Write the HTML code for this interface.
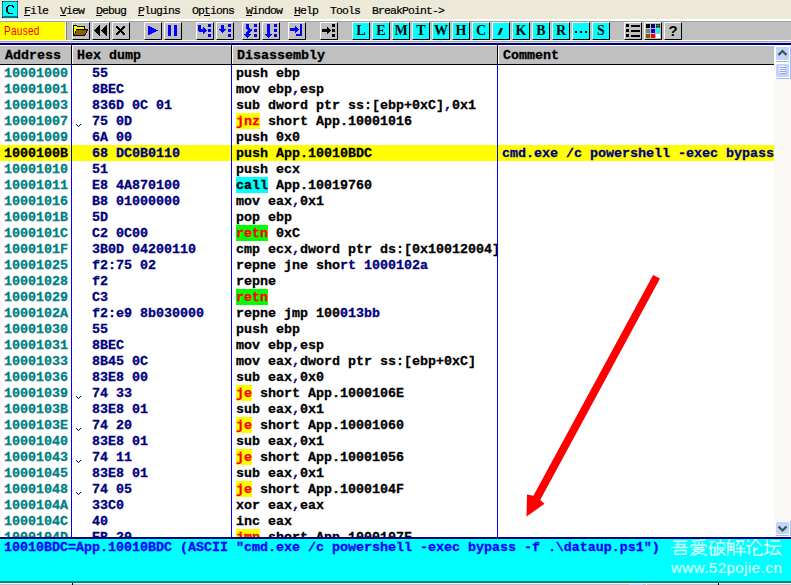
<!DOCTYPE html>
<html><head><meta charset="utf-8">
<style>
*{margin:0;padding:0;box-sizing:border-box}
html,body{width:791px;height:585px;overflow:hidden;background:#fff}
body{position:relative;font-family:"Liberation Mono",monospace}
.abs{position:absolute}
#menu{position:absolute;left:0;top:0;width:791px;height:19px;background:#ECE9D8}
.mi{position:absolute;top:3px;height:16px;line-height:16px;font-size:11.5px;letter-spacing:-0.9px;color:#000;white-space:pre;-webkit-text-stroke:0.2px #000}
.mi u{text-decoration:none;position:relative}.mi u::after{content:'';position:absolute;left:0;width:6px;top:11px;height:1px;background:#000}
#tb{position:absolute;left:0;top:22px;width:791px;height:19px;background:#C0C0C0}
.btn{position:absolute;top:22px;width:18px;height:18px;background:#C0C0C0;border-top:1px solid #fff;border-left:1px solid #fff;border-right:1px solid #000;border-bottom:1px solid #000}
.cb{background:#00FFFF;font-family:"Liberation Serif",serif;font-weight:bold;font-size:14px;line-height:15px;text-align:center;color:#000}
.btn svg{position:absolute;left:0;top:0}
#hdr{position:absolute;left:0;top:45px;width:774px;height:20px;background:#C0C0C0;border-top:1px solid #fff;border-bottom:1px solid #000}
.ht{position:absolute;top:48px;margin-left:1px;height:16px;line-height:16px;font-size:13.333px;font-weight:bold;color:#000;white-space:pre;-webkit-text-stroke:0.3px #000}
.hsep{position:absolute;top:45px;width:1px;height:19px;background:#000}
.hhl{position:absolute;top:46px;width:1px;height:18px;background:#fff}
.vsep{position:absolute;top:65px;width:1px;height:472px;background:#0000FF;z-index:3}
.row{position:absolute;left:0;width:774px;height:16px;font-size:13.333px;font-weight:bold;line-height:16px;white-space:pre;-webkit-text-stroke:0.3px currentColor}
.row span{position:absolute;top:1px}
.row.sel{background:#FFFF00}
.ad{left:4px;color:#008080}
.sel .ad{color:#000}
.hx{left:92px;color:#000080}
.ds{left:236px;color:#000}
.ds span{position:static!important}
.cm{left:502px;color:#000080}
.ds i{font-style:normal}
.hj{color:#FF0000}
.hc{color:#000}
.hr{color:#FF0000}
.hlb{position:absolute;left:236px;top:0;height:16px}
.nv{color:#000080}
.chev{position:absolute;left:76px}
#stat{position:absolute;left:0;top:537px;width:791px;height:48px;background:#00FFFF}
</style></head><body>
<div id="menu"></div>
<svg class="abs" style="left:2px;top:1px" width="16" height="17" viewBox="0 0 16 17">
<rect x="0" y="0" width="16" height="17" fill="#008080"/>
<rect x="1" y="1" width="14" height="14" fill="#00FFFF"/>
<rect x="0" y="0" width="1" height="1" fill="#000"/><rect x="15" y="0" width="1" height="1" fill="#000"/>
<rect x="0" y="16" width="1" height="1" fill="#000"/><rect x="15" y="16" width="1" height="1" fill="#000"/>
<path d="M6 4h5v1h1v2h-1v-1h-1v-1h-3v1h-1v5h1v1h4v1h-5v-1h-1v-1h-1v-5h1v-1h1z" fill="#000"/>
</svg>
<div class="mi" style="left:24px"><u>F</u>ile</div>
<div class="mi" style="left:60px"><u>V</u>iew</div>
<div class="mi" style="left:96px"><u>D</u>ebug</div>
<div class="mi" style="left:138px"><u>P</u>lugins</div>
<div class="mi" style="left:192px">Op<u>t</u>ions</div>
<div class="mi" style="left:246px"><u>W</u>indow</div>
<div class="mi" style="left:294px"><u>H</u>elp</div>
<div class="mi" style="left:330px">Tools</div>
<div class="mi" style="left:372px">BreakPoint-&gt;</div>
<div class="abs" style="left:0;top:19px;width:791px;height:2px;background:#fff"></div>
<div class="abs" style="left:0;top:21px;width:791px;height:1px;background:#A0A0A0"></div>
<div id="tb"></div>
<div class="abs" style="left:0;top:22px;width:65px;height:18px;background:#FFFF00"></div>
<div class="abs" style="left:4px;top:23px;height:16px;line-height:16px;font-family:'Liberation Sans';font-size:12px;letter-spacing:0.3px;transform:scaleX(0.84);transform-origin:0 0;color:#FF0000">Paused</div>
<div class="abs" style="left:65px;top:22px;width:1px;height:19px;background:#fff"></div>
<div class="abs" style="left:66px;top:22px;width:1px;height:19px;background:#808080"></div>
<div class="abs" style="left:0;top:40px;width:791px;height:1px;background:#fff"></div>
<div class="abs" style="left:0;top:41px;width:791px;height:1px;background:#A0A0A0"></div>
<div class="abs" style="left:0;top:42px;width:791px;height:1px;background:#D8D8D8"></div>
<div class="abs" style="left:0;top:43px;width:791px;height:2px;background:#000080"></div>
<div class="btn" style="left:72px"><svg width="18" height="18" style="left:-1px;top:-1px"><rect x="1" y="3" width="4" height="1" fill="#000"/><rect x="1" y="4" width="1" height="10" fill="#000"/><rect x="2" y="4" width="3" height="1" fill="#FFFF00"/><rect x="5" y="4" width="8" height="1" fill="#000"/><rect x="2" y="5" width="10" height="2" fill="#FFFF00"/><rect x="12" y="5" width="1" height="2" fill="#000"/><rect x="2" y="7" width="2" height="1" fill="#FFFF00"/><rect x="4" y="7" width="12" height="1" fill="#000"/><rect x="2" y="8" width="2" height="1" fill="#FFFF00"/><rect x="4" y="8" width="11" height="1" fill="#806000"/><rect x="15" y="8" width="1" height="1" fill="#000"/><rect x="2" y="9" width="1" height="2" fill="#FFFF00"/><rect x="3" y="9" width="1" height="2" fill="#000"/><rect x="4" y="9" width="10" height="2" fill="#806000"/><rect x="14" y="9" width="1" height="2" fill="#000"/><rect x="2" y="11" width="11" height="2" fill="#806000"/><rect x="13" y="11" width="1" height="2" fill="#000"/><rect x="1" y="13" width="12" height="1" fill="#000"/></svg></div>
<div class="btn" style="left:92px"><svg width="18" height="18" style="left:-1px;top:-1px"><rect x="7" y="3" width="1" height="1" fill="#000"/><rect x="6" y="4" width="2" height="1" fill="#000"/><rect x="5" y="5" width="3" height="1" fill="#000"/><rect x="4" y="6" width="4" height="1" fill="#000"/><rect x="3" y="7" width="5" height="1" fill="#000"/><rect x="2" y="8" width="6" height="1" fill="#000"/><rect x="3" y="9" width="5" height="1" fill="#000"/><rect x="4" y="10" width="4" height="1" fill="#000"/><rect x="5" y="11" width="3" height="1" fill="#000"/><rect x="6" y="12" width="2" height="1" fill="#000"/><rect x="7" y="13" width="1" height="1" fill="#000"/><rect x="14" y="3" width="1" height="1" fill="#000"/><rect x="13" y="4" width="2" height="1" fill="#000"/><rect x="12" y="5" width="3" height="1" fill="#000"/><rect x="11" y="6" width="4" height="1" fill="#000"/><rect x="10" y="7" width="5" height="1" fill="#000"/><rect x="9" y="8" width="6" height="1" fill="#000"/><rect x="10" y="9" width="5" height="1" fill="#000"/><rect x="11" y="10" width="4" height="1" fill="#000"/><rect x="12" y="11" width="3" height="1" fill="#000"/><rect x="13" y="12" width="2" height="1" fill="#000"/><rect x="14" y="13" width="1" height="1" fill="#000"/></svg></div>
<div class="btn" style="left:112px"><svg width="18" height="18" style="left:-1px;top:-1px"><rect x="4" y="4" width="2" height="1" fill="#000"/><rect x="11" y="4" width="2" height="1" fill="#000"/><rect x="4" y="5" width="3" height="1" fill="#000"/><rect x="10" y="5" width="3" height="1" fill="#000"/><rect x="5" y="6" width="3" height="1" fill="#000"/><rect x="9" y="6" width="3" height="1" fill="#000"/><rect x="6" y="7" width="5" height="1" fill="#000"/><rect x="7" y="8" width="3" height="1" fill="#000"/><rect x="6" y="9" width="5" height="1" fill="#000"/><rect x="5" y="10" width="3" height="1" fill="#000"/><rect x="9" y="10" width="3" height="1" fill="#000"/><rect x="4" y="11" width="3" height="1" fill="#000"/><rect x="10" y="11" width="3" height="1" fill="#000"/><rect x="4" y="12" width="2" height="1" fill="#000"/><rect x="11" y="12" width="2" height="1" fill="#000"/></svg></div>
<div class="btn" style="left:144px"><svg width="18" height="18" style="left:-1px;top:-1px"><rect x="4" y="4" width="2" height="1" fill="#0000FF"/><rect x="4" y="5" width="4" height="1" fill="#0000FF"/><rect x="4" y="6" width="6" height="1" fill="#0000FF"/><rect x="4" y="7" width="8" height="1" fill="#0000FF"/><rect x="4" y="8" width="10" height="1" fill="#0000FF"/><rect x="4" y="9" width="8" height="1" fill="#0000FF"/><rect x="4" y="10" width="6" height="1" fill="#0000FF"/><rect x="4" y="11" width="4" height="1" fill="#0000FF"/><rect x="4" y="12" width="2" height="1" fill="#0000FF"/></svg></div>
<div class="btn" style="left:164px"><svg width="18" height="18" style="left:-1px;top:-1px"><rect x="4" y="3" width="3" height="11" fill="#0000FF"/><rect x="10" y="3" width="3" height="11" fill="#0000FF"/></svg></div>
<div class="btn" style="left:196px"><svg width="18" height="18" style="left:-1px;top:-1px"><rect x="2" y="3" width="3" height="6" fill="#0000FF"/><rect x="2" y="7" width="5" height="2" fill="#0000FF"/><rect x="3" y="9" width="4" height="1" fill="#0000FF"/><rect x="7" y="5" width="1" height="7" fill="#0000FF"/><rect x="8" y="6" width="1" height="5" fill="#0000FF"/><rect x="9" y="7" width="1" height="3" fill="#0000FF"/><rect x="10" y="8" width="1" height="1" fill="#0000FF"/><rect x="12" y="2" width="3" height="3" fill="#0000FF"/><rect x="12" y="7" width="3" height="3" fill="#0000FF"/><rect x="12" y="12" width="3" height="3" fill="#0000FF"/></svg></div>
<div class="btn" style="left:216px"><svg width="18" height="18" style="left:-1px;top:-1px"><rect x="5" y="3" width="3" height="4" fill="#0000FF"/><rect x="3" y="7" width="7" height="1" fill="#0000FF"/><rect x="4" y="8" width="5" height="1" fill="#0000FF"/><rect x="5" y="9" width="3" height="1" fill="#0000FF"/><rect x="6" y="10" width="1" height="1" fill="#0000FF"/><rect x="12" y="2" width="3" height="3" fill="#0000FF"/><rect x="12" y="7" width="3" height="3" fill="#0000FF"/><rect x="12" y="12" width="3" height="3" fill="#0000FF"/></svg></div>
<div class="btn" style="left:242px"><svg width="18" height="18" style="left:-1px;top:-1px"><rect x="4" y="2" width="3" height="4" fill="#0000FF"/><rect x="4" y="6" width="4" height="1" fill="#0000FF"/><rect x="5" y="7" width="5" height="1" fill="#0000FF"/><rect x="6" y="8" width="4" height="1" fill="#0000FF"/><rect x="5" y="9" width="4" height="1" fill="#0000FF"/><rect x="4" y="10" width="4" height="1" fill="#0000FF"/><rect x="4" y="11" width="3" height="1" fill="#0000FF"/><rect x="2" y="12" width="7" height="1" fill="#0000FF"/><rect x="3" y="13" width="5" height="1" fill="#0000FF"/><rect x="4" y="14" width="3" height="1" fill="#0000FF"/><rect x="5" y="15" width="1" height="1" fill="#0000FF"/><rect x="12" y="2" width="3" height="3" fill="#0000FF"/><rect x="12" y="7" width="3" height="3" fill="#0000FF"/><rect x="12" y="12" width="3" height="3" fill="#0000FF"/></svg></div>
<div class="btn" style="left:262px"><svg width="18" height="18" style="left:-1px;top:-1px"><rect x="5" y="2" width="3" height="10" fill="#0000FF"/><rect x="3" y="12" width="7" height="1" fill="#0000FF"/><rect x="4" y="13" width="5" height="1" fill="#0000FF"/><rect x="5" y="14" width="3" height="1" fill="#0000FF"/><rect x="6" y="15" width="1" height="1" fill="#0000FF"/><rect x="12" y="2" width="3" height="3" fill="#0000FF"/><rect x="12" y="7" width="3" height="3" fill="#0000FF"/><rect x="12" y="12" width="3" height="3" fill="#0000FF"/></svg></div>
<div class="btn" style="left:288px"><svg width="18" height="18" style="left:-1px;top:-1px"><rect x="2" y="6" width="5" height="3" fill="#0000FF"/><rect x="7" y="4" width="1" height="7" fill="#0000FF"/><rect x="8" y="5" width="1" height="5" fill="#0000FF"/><rect x="9" y="6" width="1" height="3" fill="#0000FF"/><rect x="10" y="7" width="1" height="1" fill="#0000FF"/><rect x="12" y="2" width="2" height="12" fill="#0000FF"/><rect x="8" y="12" width="4" height="2" fill="#0000FF"/></svg></div>
<div class="btn" style="left:320px"><svg width="18" height="18" style="left:-1px;top:-1px"><rect x="2" y="7" width="5" height="3" fill="#000"/><rect x="7" y="5" width="1" height="7" fill="#000"/><rect x="8" y="6" width="1" height="5" fill="#000"/><rect x="9" y="7" width="1" height="3" fill="#000"/><rect x="10" y="8" width="1" height="1" fill="#000"/><rect x="12" y="2" width="3" height="3" fill="#000"/><rect x="12" y="7" width="3" height="3" fill="#000"/><rect x="12" y="12" width="3" height="3" fill="#000"/></svg></div>
<div class="btn cb" style="left:352px">L</div>
<div class="btn cb" style="left:372px">E</div>
<div class="btn cb" style="left:392px">M</div>
<div class="btn cb" style="left:412px">T</div>
<div class="btn cb" style="left:432px">W</div>
<div class="btn cb" style="left:452px">H</div>
<div class="btn cb" style="left:472px">C</div>
<div class="btn cb" style="left:492px"><svg width="18" height="18" style="left:-1px;top:-1px"><path d="M8.5 6H11L8 13H5.5Z" fill="#000"/></svg></div>
<div class="btn cb" style="left:512px">K</div>
<div class="btn cb" style="left:532px">B</div>
<div class="btn cb" style="left:552px">R</div>
<div class="btn cb" style="left:572px"><svg width="18" height="18" style="left:-1px;top:-1px"><rect x="3" y="9" width="2" height="2" fill="#000"/><rect x="8" y="9" width="2" height="2" fill="#000"/><rect x="13" y="9" width="2" height="2" fill="#000"/></svg></div>
<div class="btn cb" style="left:592px">S</div>
<div class="btn" style="left:624px"><svg width="18" height="18" style="left:-1px;top:-1px"><rect x="2" y="2" width="3" height="3" fill="#000"/><rect x="2" y="7" width="3" height="3" fill="#000"/><rect x="2" y="12" width="3" height="3" fill="#000"/><rect x="7" y="3" width="9" height="2" fill="#000"/><rect x="7" y="8" width="9" height="2" fill="#000"/><rect x="7" y="13" width="9" height="2" fill="#000"/></svg></div>
<div class="btn" style="left:644px"><svg width="18" height="18" style="left:-1px;top:-1px"><rect x="2" y="2" width="4" height="4" fill="#000"/><rect x="7" y="2" width="4" height="4" fill="#000080"/><rect x="12" y="2" width="4" height="4" fill="#204040"/><rect x="13" y="3" width="2" height="1" fill="#00C000"/><rect x="13" y="5" width="2" height="1" fill="#00C000"/><rect x="2" y="7" width="4" height="4" fill="#808080"/><rect x="7" y="7" width="4" height="4" fill="#0000FF"/><rect x="12" y="7" width="4" height="4" fill="#00FFFF"/><rect x="2" y="12" width="4" height="4" fill="#806000"/><rect x="7" y="12" width="4" height="4" fill="#FF0000"/><rect x="12" y="12" width="4" height="4" fill="#FFFFFF"/></svg></div>
<div class="btn" style="left:664px;font:bold 15px 'Liberation Sans';line-height:15px;text-align:center">?</div>
<div id="hdr"></div>
<div class="ht" style="left:4px">Address</div>
<div class="ht" style="left:76px">Hex dump</div>
<div class="ht" style="left:236px">Disassembly</div>
<div class="ht" style="left:502px">Comment</div>
<div class="hsep" style="left:71px"></div><div class="hhl" style="left:72px"></div>
<div class="hsep" style="left:231px"></div><div class="hhl" style="left:232px"></div>
<div class="hsep" style="left:497px"></div><div class="hhl" style="left:498px"></div>
<div class="row" style="top:65px"><span class="ad">10001000</span><span class="hx">55</span><span class="ds">push ebp</span></div>
<div class="row" style="top:81px"><span class="ad">10001001</span><span class="hx">8BEC</span><span class="ds">mov ebp<span class="nv">,</span>esp</span></div>
<div class="row" style="top:97px"><span class="ad">10001003</span><span class="hx">836D 0C 01</span><span class="ds">sub dword ptr ss:[ebp+0xC]<span class="nv">,</span>0x1</span></div>
<div class="row" style="top:113px"><b class="hlb" style="width:24px;background:#FFFF00"></b><span class="ad">10001007</span><span class="hx">75 0D</span><span class="ds"><i class="hj">jnz</i> short App.10001016</span></div>
<svg class="chev" style="top:124px" width="5" height="3"><path d="M0 0h1v1h-1zM4 0h1v1h-1zM1 1h1v1h-1zM3 1h1v1h-1zM2 2h1v1h-1z" fill="#000080"/></svg>
<div class="row" style="top:129px"><span class="ad">10001009</span><span class="hx">6A 00</span><span class="ds">push 0x0</span></div>
<div class="row sel" style="top:145px"><span class="ad">1000100B</span><span class="hx">68 DC0B0110</span><span class="ds">push App.10010BDC</span><span class="cm">cmd.exe /c powershell -exec bypass</span></div>
<div class="row" style="top:161px"><span class="ad">10001010</span><span class="hx">51</span><span class="ds">push ecx</span></div>
<div class="row" style="top:177px"><b class="hlb" style="width:32px;background:#00FFFF"></b><span class="ad">10001011</span><span class="hx">E8 4A870100</span><span class="ds"><i class="hc">call</i> App.10019760</span></div>
<div class="row" style="top:193px"><span class="ad">10001016</span><span class="hx">B8 01000000</span><span class="ds">mov eax<span class="nv">,</span>0x1</span></div>
<div class="row" style="top:209px"><span class="ad">1000101B</span><span class="hx">5D</span><span class="ds">pop ebp</span></div>
<div class="row" style="top:225px"><b class="hlb" style="width:32px;background:#00FF00"></b><span class="ad">1000101C</span><span class="hx">C2 0C00</span><span class="ds"><i class="hr">retn</i> 0xC</span></div>
<div class="row" style="top:241px"><span class="ad">1000101F</span><span class="hx">3B0D 04200110</span><span class="ds">cmp ecx<span class="nv">,</span>dword ptr ds:[0x10012004]</span></div>
<div class="row" style="top:257px"><span class="ad">10001025</span><span class="hx">f2:75 02</span><span class="ds">repne jne sho<span class="nv">rt 1000102a</span></span></div>
<div class="row" style="top:273px"><span class="ad">10001028</span><span class="hx">f2</span><span class="ds">repne</span></div>
<div class="row" style="top:289px"><b class="hlb" style="width:32px;background:#00FF00"></b><span class="ad">10001029</span><span class="hx">C3</span><span class="ds"><i class="hr">retn</i></span></div>
<div class="row" style="top:305px"><span class="ad">1000102A</span><span class="hx">f2:e9 8b030000</span><span class="ds">repne jmp 100<span class="nv">013bb</span></span></div>
<div class="row" style="top:321px"><span class="ad">10001030</span><span class="hx">55</span><span class="ds">push ebp</span></div>
<div class="row" style="top:337px"><span class="ad">10001031</span><span class="hx">8BEC</span><span class="ds">mov ebp<span class="nv">,</span>esp</span></div>
<div class="row" style="top:353px"><span class="ad">10001033</span><span class="hx">8B45 0C</span><span class="ds">mov eax<span class="nv">,</span>dword ptr ss:[ebp+0xC]</span></div>
<div class="row" style="top:369px"><span class="ad">10001036</span><span class="hx">83E8 00</span><span class="ds">sub eax<span class="nv">,</span>0x0</span></div>
<div class="row" style="top:385px"><b class="hlb" style="width:16px;background:#FFFF00"></b><span class="ad">10001039</span><span class="hx">74 33</span><span class="ds"><i class="hj">je</i> short App.1000106E</span></div>
<svg class="chev" style="top:396px" width="5" height="3"><path d="M0 0h1v1h-1zM4 0h1v1h-1zM1 1h1v1h-1zM3 1h1v1h-1zM2 2h1v1h-1z" fill="#000080"/></svg>
<div class="row" style="top:401px"><span class="ad">1000103B</span><span class="hx">83E8 01</span><span class="ds">sub eax<span class="nv">,</span>0x1</span></div>
<div class="row" style="top:417px"><b class="hlb" style="width:16px;background:#FFFF00"></b><span class="ad">1000103E</span><span class="hx">74 20</span><span class="ds"><i class="hj">je</i> short App.10001060</span></div>
<svg class="chev" style="top:428px" width="5" height="3"><path d="M0 0h1v1h-1zM4 0h1v1h-1zM1 1h1v1h-1zM3 1h1v1h-1zM2 2h1v1h-1z" fill="#000080"/></svg>
<div class="row" style="top:433px"><span class="ad">10001040</span><span class="hx">83E8 01</span><span class="ds">sub eax<span class="nv">,</span>0x1</span></div>
<div class="row" style="top:449px"><b class="hlb" style="width:16px;background:#FFFF00"></b><span class="ad">10001043</span><span class="hx">74 11</span><span class="ds"><i class="hj">je</i> short App.10001056</span></div>
<svg class="chev" style="top:460px" width="5" height="3"><path d="M0 0h1v1h-1zM4 0h1v1h-1zM1 1h1v1h-1zM3 1h1v1h-1zM2 2h1v1h-1z" fill="#000080"/></svg>
<div class="row" style="top:465px"><span class="ad">10001045</span><span class="hx">83E8 01</span><span class="ds">sub eax<span class="nv">,</span>0x1</span></div>
<div class="row" style="top:481px"><b class="hlb" style="width:16px;background:#FFFF00"></b><span class="ad">10001048</span><span class="hx">74 05</span><span class="ds"><i class="hj">je</i> short App.1000104F</span></div>
<svg class="chev" style="top:492px" width="5" height="3"><path d="M0 0h1v1h-1zM4 0h1v1h-1zM1 1h1v1h-1zM3 1h1v1h-1zM2 2h1v1h-1z" fill="#000080"/></svg>
<div class="row" style="top:497px"><span class="ad">1000104A</span><span class="hx">33C0</span><span class="ds">xor eax<span class="nv">,</span>eax</span></div>
<div class="row" style="top:513px"><span class="ad">1000104C</span><span class="hx">40</span><span class="ds">inc eax</span></div>
<div class="row" style="top:529px"><b class="hlb" style="width:24px;background:#FFFF00"></b><span class="ad">1000104D</span><span class="hx">EB 20</span><span class="ds"><i class="hj">jmp</i> short App.1000107F</span></div>
<div class="vsep" style="left:71px"></div>
<div class="vsep" style="left:231px"></div>
<div class="vsep" style="left:497px"></div>
<div class="abs" style="left:774px;top:45px;width:17px;height:492px;background:#F9F8F4"></div>
<svg class="abs" style="left:774px;top:45px" width="17" height="492">
<g transform="translate(-774,-45)">
<rect x="775.5" y="46.5" width="14" height="14" rx="2" fill="#C3D3F9" stroke="#FFFFFF"/>
<path d="M776 61.5H789" stroke="#A2B9EC"/>
<path d="M778.5 55L782.5 51L786.5 55" fill="none" stroke="#2F5A4C" stroke-width="2.2"/>
<rect x="775.5" y="63.5" width="14" height="14" rx="2" fill="#C3D3F9" stroke="#FFFFFF"/>
<path d="M776 78.5H789" stroke="#A2B9EC"/>
<path d="M779 66.5h6M779 68.5h6M779 70.5h6M779 72.5h6" stroke="#F4F7FF"/>
<path d="M780 67.5h6M780 69.5h6M780 71.5h6M780 73.5h6" stroke="#8BA7E0"/>
<rect x="775.5" y="521.5" width="14" height="13" rx="2" fill="#C3D3F9" stroke="#FFFFFF"/>
<path d="M776 535.5H789" stroke="#A2B9EC"/>
<path d="M778.5 526.5L782.5 530.5L786.5 526.5" fill="none" stroke="#2F5A4C" stroke-width="2.2"/>
</g></svg>
<div class="abs" style="left:790px;top:46px;width:1px;height:33px;background:#A8BDEB"></div>
<div class="abs" style="left:790px;top:521px;width:1px;height:15px;background:#A8BDEB"></div>

<div id="stat"></div>
<div class="abs" style="left:0;top:537px;width:791px;height:2px;background:#000080"></div>
<div class="abs" style="left:0;top:581px;width:791px;height:2px;background:#008080"></div>
<div class="abs" style="left:0;top:583px;width:791px;height:1px;background:#fff"></div>
<div class="abs" style="left:0;top:584px;width:791px;height:1px;background:#C0C0C0"></div>
<div class="abs" style="left:72px;top:583px;width:1px;height:2px;background:#000"></div>
<div class="abs" style="left:629px;top:584px;width:14px;height:1px;background:#C4D3F8"></div>
<div class="abs" style="left:646px;top:583px;width:1px;height:2px;background:#FFF"></div>
<div class="abs" style="left:718px;top:583px;width:1px;height:2px;background:#000"></div>
<div class="abs" style="left:4px;top:540px;height:16px;line-height:16px;font-size:13.333px;font-weight:bold;color:#0000FF;white-space:pre;-webkit-text-stroke:0.3px #0000FF">10010BDC=App.10010BDC (ASCII "cmd.exe /c powershell -exec bypass -f .\dataup.ps1")</div>
<svg class="abs" style="left:0;top:0;z-index:5" width="791" height="585">
<path d="M653.1 275L660 278.6L540.2 500L544.5 503.8L526.5 516.6L527 494.4L533.4 495.7Z" fill="#FF0000"/>
</svg>
<svg class="abs" style="left:660px;top:536px;z-index:6" width="131" height="24" fill="none" stroke="rgba(240,255,255,0.9)" stroke-width="1.5">
<g transform="translate(-660,-536)">
<path d="M673 541.2H687.2M675.6 544.5H685.7M678.3 541.2L677.8 547.5M684.2 544.5V547.5M671.3 547.6H688.7M675.1 550.6V554.5M675.1 550.6H686.2V554.5M675.1 554.2H686.2"/>
<path d="M705.4 539.8L691.8 541.3M694.3 542L695 543.8M698.5 542L699 543.8M703 542L702 543.8M691.5 547.5V545.1H706.2V547.5M694 547.6H704M692.2 549.5H705M699 547.5L690.5 555.5M704.5 549.8L693 555.5M695.5 551L707 555.5"/>
<path d="M709.5 541.5H715M712.5 541.5L709.3 549M711 547.5H715V555H711ZM716 543H724.5V546M720.5 539.5V543M717.5 543V553.5L716.5 555.5M718 548H724.5L717.5 555.5M719.5 549.5L725.5 555.5"/>
<path d="M730 539.5L727 544M728 543.5H734V555.5M728 543.5V556M728 546.8H734M728 549.8H734M731 543.5V551M736 541H743.5L743 545M739.5 541L736.5 546M736 548.5H745M735 551.7H746M740.5 545V556"/>
<path d="M747.5 540L749 542.2M746 545.7H749.2V553.5L751.2 551.8M755.5 539.5L750.5 546.2M755.5 539.5L762 546.2M758 548L753 551.2M754.2 547V555.2H762V553"/>
<path d="M764 544.7H769.5M767.3 539.5V553M763.8 554.5L770 551.8M770.5 541H780M769 546.2H781.5M775 546.2L771.2 554.3L779.5 553.2M777 550L781.3 555.3"/>
</g></svg>
<div class="abs" style="left:671px;top:560px;z-index:6;height:16px;line-height:16px;font-family:'Liberation Sans';font-size:15px;letter-spacing:0.5px;color:rgba(240,255,255,0.9);-webkit-text-stroke:0.2px rgba(240,255,255,0.9);white-space:pre">www.52pojie.cn</div>
</body></html>
